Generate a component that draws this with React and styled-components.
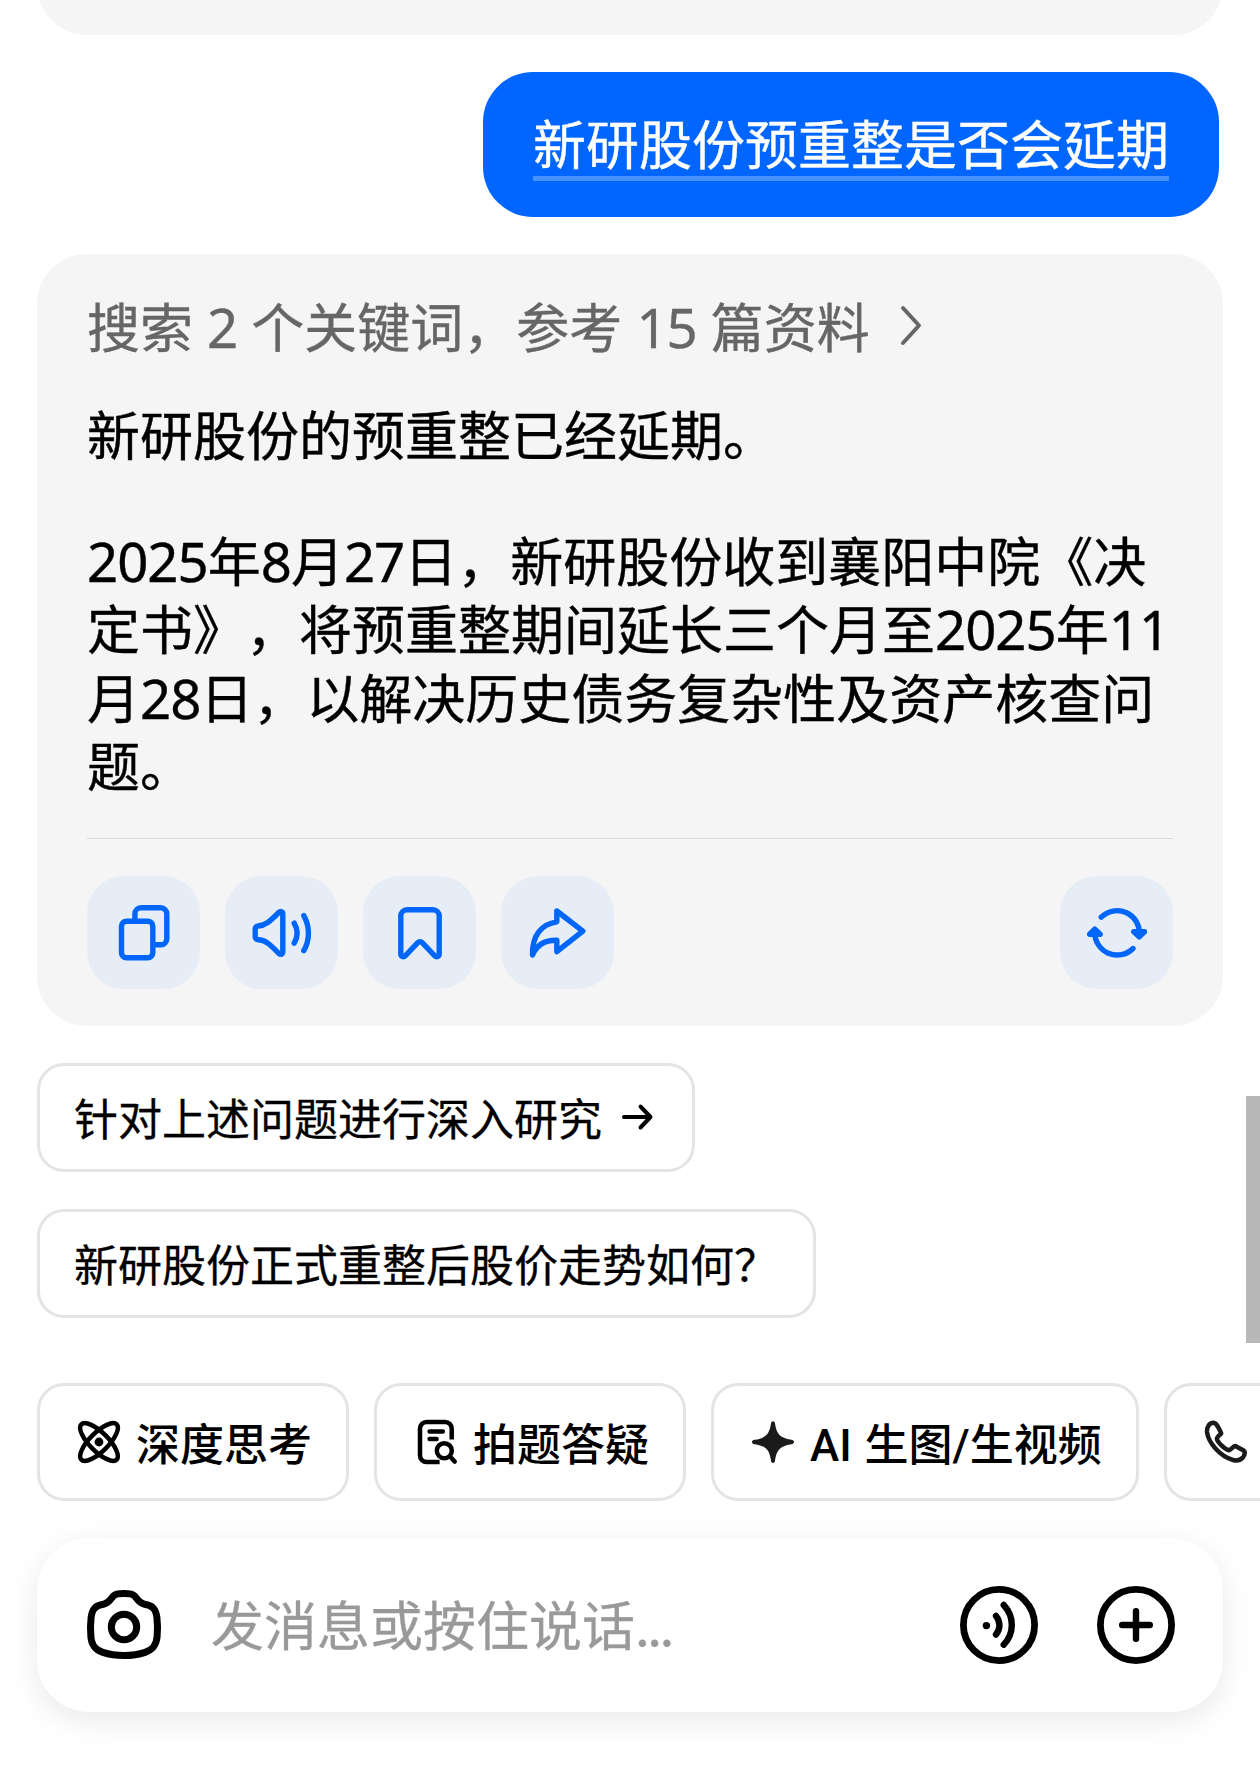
import React from 'react'
import styled, { createGlobalStyle } from 'styled-components'

const GlobalStyle = createGlobalStyle`
  * {
    box-sizing: border-box;
  }
  body {
    margin: 0;
    background: #fff;
    font-family: 'Noto Sans CJK SC', sans-serif;
    text-spacing-trim: space-all;
  }
`

const Screen = styled.main`
  position: relative;
  display: flex;
  flex-direction: column;
  width: 1260px;
  height: 1790px;
  padding: 0 37px;
  overflow: hidden;
  background: #fff;
  color: #000;
`

const PreviousAnswer = styled.div`
  flex: none;
  height: 35px;
  overflow: hidden;
  display: flex;
  align-items: flex-end;
  &::after {
    content: '';
    flex: 1;
    height: 140px;
    border-radius: 50px;
    background: #f5f5f5;
  }
`

const Question = styled.div`
  align-self: flex-end;
  flex: none;
  height: 145px;
  margin: 37px 4px 0 0;
  padding: 32px 50px 0;
  border-radius: 50px;
  background: #0066ff;
`

const QuestionText = styled.div`
  height: 77px;
  border-bottom: 5px solid #4790ff;
  color: #fff;
  font-size: 53px;
  line-height: 77px;
  white-space: nowrap;
  -webkit-text-stroke: 0.4px;
`

const Answer = styled.section`
  flex: none;
  display: flex;
  flex-direction: column;
  height: 772px;
  margin-top: 37px;
  padding: 35px 50px 37px;
  border-radius: 50px;
  background: #f5f5f5;
`

const Sources = styled.div`
  display: flex;
  align-items: center;
  gap: 28px;
  height: 72px;
  color: #666;
  font-size: 53px;
  line-height: 72px;
  word-spacing: 2.2px;
  white-space: nowrap;
  -webkit-text-stroke: 0.4px;
`

const Paragraph = styled.p`
  margin: ${({ $top }) => $top}px 0 0;
  font-size: 53px;
  line-height: 68.2px;
  white-space: nowrap;
  -webkit-text-stroke: 0.4px;
`

const Num = styled.span`
  font-family: 'Noto Sans', sans-serif;
  font-size: 54.5px;
  line-height: 1;
  letter-spacing: -1px;
`

const Actions = styled.div`
  display: flex;
  gap: 25px;
  margin-top: auto;
  padding-top: 37px;
  border-top: 1px solid #dadada;
`

const ActionButton = styled.button`
  display: flex;
  align-items: center;
  justify-content: center;
  width: 113px;
  height: 113px;
  margin: 0 0 0 ${({ $end }) => ($end ? 'auto' : 0)};
  padding: 0;
  border: 0;
  border-radius: 37px;
  background: #e6edf7;
  color: #0066fa;
`

const Suggestion = styled.button`
  align-self: flex-start;
  flex: none;
  display: flex;
  align-items: center;
  gap: 17px;
  height: 109px;
  margin: 37px 0 0;
  padding: 0 35px 2px 34px;
  border: 3px solid #e4e4e4;
  border-radius: 27px;
  background: #fff;
  color: #000;
  font-family: inherit;
  font-size: 44px;
  white-space: nowrap;
  -webkit-text-stroke: 0.3px;
`

const Tools = styled.div`
  flex: none;
  display: flex;
  gap: 25px;
  margin-top: 65px;
`

const Tool = styled.button`
  flex: none;
  display: flex;
  align-items: center;
  gap: 13px;
  width: ${({ $width }) => $width}px;
  height: 118px;
  padding: 0 0 0 35px;
  border: 3px solid #e4e4e4;
  border-radius: 27px;
  background: #fff;
  color: #000;
  font-family: Roboto, 'Noto Sans CJK SC', sans-serif;
  font-size: 44px;
  font-weight: 500;
  word-spacing: 2px;
  white-space: nowrap;
`

const InputBar = styled.div`
  flex: none;
  display: flex;
  align-items: center;
  height: 174px;
  margin-top: 37px;
  padding: 0 48px 0 47px;
  border-radius: 52px;
  background: #fff;
  box-shadow: 0 8px 30px rgba(0, 0, 0, 0.09);
`

const Placeholder = styled.div`
  flex: 1;
  margin-left: 47px;
  padding-bottom: 5px;
  color: #999;
  font-size: 53px;
  line-height: 78px;
  white-space: nowrap;
  -webkit-text-stroke: 0.3px;
`

const Dots = styled.span`
  letter-spacing: -2.5px;
`

const RoundIcons = styled.div`
  display: flex;
  gap: 59px;
`

const ScrollThumb = styled.div`
  position: absolute;
  top: 1096px;
  right: 0;
  width: 14px;
  height: 247px;
  background: #b8b8b8;
`

const Svg = styled.svg`
  display: block;
  flex: none;
  fill: none;
  stroke: currentColor;
  stroke-linecap: round;
  stroke-linejoin: round;
`

const Icon = ({ size, height = size, stroke, children }) => (
  <Svg
    width={size}
    height={height}
    viewBox={`0 0 ${size} ${height}`}
    strokeWidth={stroke}
  >
    {children}
  </Svg>
)

const actions = [
  {
    name: 'copy',
    icon: (
      <>
        <rect x="7.5" y="18.2" width="31.3" height="36.6" rx="5" />
        <path d="M20.9 17V10.8a6 6 0 0 1 6-6h19.9a6 6 0 0 1 6 6v25a6 6 0 0 1-6 6H40" />
      </>
    )
  },
  {
    name: 'speak',
    icon: (
      <>
        <path d="M3.2 26a3 3 0 0 1 3-3C14 22.5 19 17 27 9.3c1.6-1.5 3.8-.5 3.8 1.6V49c0 2.1-2.2 3.1-3.8 1.6C19 42.5 14 37 6.2 36.8a3 3 0 0 1-3-3z" />
        <path d="M42.2 20.2c3.7 6.2 3.7 13.8 0 20" />
        <path d="M51.8 12.6c6.2 11 6.2 24.2 0 35" />
      </>
    )
  },
  {
    name: 'save',
    icon: (
      <path d="M17 6.8h26a6.2 6.2 0 0 1 6.2 6.2v38c0 2.4-2.7 3.5-4.4 1.8L32.2 39.6a3 3 0 0 0-4.4 0L15.2 52.8c-1.7 1.7-4.4.6-4.4-1.8V13A6.2 6.2 0 0 1 17 6.8z" />
    )
  },
  {
    name: 'share',
    icon: (
      <path d="M28.8 8L54.8 28.2 28.8 48.6V37.2C17 37 9 41 4.5 52 4 33 13 21 28.8 18.8z" />
    )
  },
  {
    name: 'retry',
    end: true,
    icon: (
      <>
        <path d="M14.2 14.2A22.4 22.4 0 0 1 52.4 31" />
        <path d="M46.8 28.7h10.7l-5.3 5.1z" fill="currentColor" />
        <path d="M46 45.5A22.4 22.4 0 0 1 7.8 29" />
        <path d="M2.6 31.3h10.6l-5.4-5.1z" fill="currentColor" />
      </>
    )
  }
]

const tools = [
  {
    name: 'think',
    label: '深度思考',
    width: 312,
    icon: (
      <>
        <ellipse cx="24" cy="24" rx="25" ry="9.3" transform="rotate(45 24 24)" />
        <ellipse cx="24" cy="24" rx="25" ry="9.3" transform="rotate(-45 24 24)" />
        <circle cx="24" cy="24" r="4.4" fill="currentColor" stroke="none" />
      </>
    )
  },
  {
    name: 'solve',
    label: '拍题答疑',
    width: 312,
    icon: (
      <>
        <path
          d="M39.7 21.5V10.6A6.6 6.6 0 0 0 33.1 4H14.6A6.6 6.6 0 0 0 8 10.6v26.8a6.6 6.6 0 0 0 6.6 6.6h13"
          strokeLinecap="butt"
        />
        <path d="M17.6 13.5h13.2M17.6 21h7" />
        <circle cx="32.3" cy="32.7" r="7.5" />
        <path d="M38 38.5l4.7 5" />
      </>
    )
  },
  {
    name: 'create',
    label: 'AI 生图/生视频',
    width: 428,
    icon: (
      <path
        d="M24 3.2c1.2 0 1.9.9 2 2.4C27.5 15.5 30.5 20 42.4 21.8c1.6.2 2.6 1 2.6 2.2s-1 2-2.6 2.2C30.5 28 27.5 32.5 26 42.6c-.1 1.5-.8 2.4-2 2.4s-1.9-.9-2-2.4C20.5 32.5 17.5 28 5.6 26.2 4 26 3 25.2 3 24s1-2 2.6-2.2C17.5 20 20.5 15.5 22 5.6c.1-1.5.8-2.4 2-2.4z"
        fill="#1a1a1a"
        stroke="none"
      />
    )
  },
  {
    name: 'call',
    width: 272,
    icon: (
      <path
        d="M11.2 4.8C14.5 4.8 16.5 9.5 19.2 15.3 17.5 17.5 14.6 19 14.9 21 15.2 23.5 22 31 27 32.3 29.5 31.8 30.5 28.3 33.4 28L41.6 32.4C43.3 33.7 43 37 40.8 39.6 38 42.5 35 43 31 42 18 38.5 6.5 25 5 14 4.6 9 7.5 4.8 11.2 4.8z"
        stroke="#1a1a1a"
      />
    )
  }
]

const App = () => (
  <>
    <GlobalStyle />
    <Screen>
      <PreviousAnswer />
      <Question>
        <QuestionText>新研股份预重整是否会延期</QuestionText>
      </Question>

      <Answer>
        <Sources>
          <span>
            搜索 <Num>2</Num> 个关键词，参考 <Num>15</Num> 篇资料
          </span>
          <Icon size={28} height={44} stroke={4}>
            <path d="M5 5l16 17.5L5 40" />
          </Icon>
        </Sources>
        <Paragraph $top={38}>新研股份的预重整已经延期。</Paragraph>
        <Paragraph $top={58}>
          <Num>2025</Num>年<Num>8</Num>月<Num>27</Num>
          日，新研股份收到襄阳中院《决
          <br />
          定书》，将预重整期间延长三个月至<Num>2025</Num>年<Num>11</Num>
          <br />月<Num>28</Num>日，以解决历史债务复杂性及资产核查问
          <br />
          题。
        </Paragraph>
        <Actions>
          {actions.map(({ name, icon, end }) => (
            <ActionButton key={name} aria-label={name} $end={end}>
              <Icon size={60} stroke={5.4}>
                {icon}
              </Icon>
            </ActionButton>
          ))}
        </Actions>
      </Answer>

      <Suggestion>
        针对上述问题进行深入研究
        <Icon size={38} height={32} stroke={4}>
          <path d="M5 16h26.5M21.5 5.5L31.5 16l-10 10.5" />
        </Icon>
      </Suggestion>
      <Suggestion>新研股份正式重整后股价走势如何？</Suggestion>

      <Tools>
        {tools.map(({ name, label, width, icon }) => (
          <Tool key={name} aria-label={name} $width={width}>
            <Icon size={48} stroke={4.5}>
              {icon}
            </Icon>
            {label}
          </Tool>
        ))}
      </Tools>

      <InputBar>
        <Icon size={80} stroke={7}>
          <path d="M40 8.5c5.5 0 8.5.2 10.5 2.3 3 3.2 4.2 7.6 10 8.5 8 1.2 11.3 4.5 12.4 13 .9 7.5.8 12.5.2 19.5-.9 9.5-5 13.2-12 15.6-12.5 4.2-29.7 4.2-42.2 0-7-2.4-11.1-6.1-12-15.6-.6-7-.7-12 .2-19.5 1.1-8.5 4.4-11.8 12.4-13 5.8-.9 7-5.3 10-8.5 2-2.1 5-2.3 10.5-2.3z" />
          <circle cx="40" cy="42" r="12.7" />
        </Icon>
        <Placeholder>
          发消息或按住说话<Dots>...</Dots>
        </Placeholder>
        <RoundIcons>
          <Icon size={78} stroke={6.8}>
            <circle cx="39" cy="39" r="35.6" />
            <circle cx="26.4" cy="39.6" r="3.7" fill="currentColor" stroke="none" />
            <path
              d="M36 30c4.6 5.5 4.6 13 0 18.5M43.7 19c10.8 11.5 10.8 28.5 0 39.7"
              strokeWidth="6.4"
            />
          </Icon>
          <Icon size={78} stroke={6.8}>
            <circle cx="39" cy="39" r="35.6" />
            <path d="M39 25.2v27.6M25.2 39h27.6" strokeWidth="6.4" />
          </Icon>
        </RoundIcons>
      </InputBar>
      <ScrollThumb />
    </Screen>
  </>
)

export default App
